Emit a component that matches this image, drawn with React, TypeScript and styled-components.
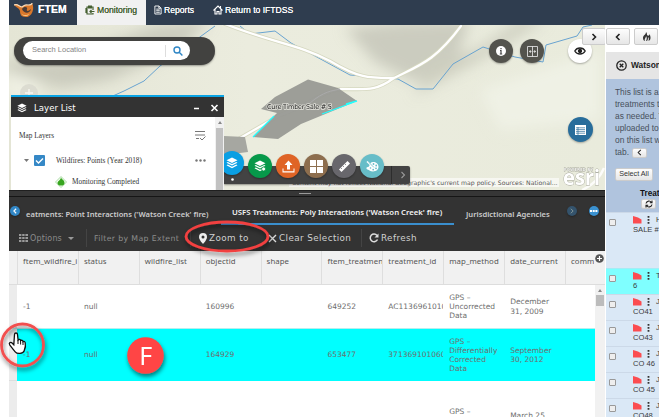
import React from "react";
import styled, { createGlobalStyle } from "styled-components";

const Global = createGlobalStyle`
  * { box-sizing: border-box; }
  body { margin: 0; background: #fff; overflow: hidden; }
  svg { display: block; flex: none; }
`;

const sans = `"Liberation Sans", Arial, sans-serif`;
const noto = `"Noto Sans", "Open Sans", sans-serif`;
const verdana = `"DejaVu Sans", Verdana, sans-serif`;

const Page = styled.div`
  position: relative;
  width: 659px;
  height: 417px;
  padding-left: 9px;
  overflow: hidden;
  background: #fff;
  display: flex;
  flex-direction: column;
  font-family: ${sans};
`;

/* ---------- top navigation ---------- */
const Nav = styled.header`
  height: 25px;
  flex: none;
  display: flex;
  background: #2f3d4f;
  color: #fff;
`;
const Brand = styled.div`
  width: 68px;
  display: flex;
  align-items: center;
  padding: 0 0 6px 5px;
  gap: 4px;
  font-weight: bold;
  font-size: 10.4px;
  letter-spacing: 0.1px;
  text-shadow: 0 0 0.5px #fff;
`;
const NavTab = styled.div<{ $active?: boolean; $left: number; $w: number }>`
  width: ${(p) => p.$w}px;
  padding: 0 0 5px ${(p) => p.$left}px;
  display: flex;
  align-items: center;
  gap: 2px;
  white-space: nowrap;
  font-size: 8.6px;
  color: ${(p) => (p.$active ? "#445f30" : "#fff")};
  background: ${(p) => (p.$active ? "#f1f1f1" : "none")};
  text-shadow: 0 0 0.4px currentColor;
`;

const Body = styled.div`
  flex: 1;
  min-height: 0;
  display: flex;
`;
const Main = styled.main`
  width: 596px;
  flex: none;
  display: flex;
  flex-direction: column;
`;

/* ---------- map ---------- */
const MapArea = styled.section`
  position: relative;
  height: 165px;
  flex: none;
  overflow: hidden;
  background: #e9eadb;
`;
const Over = styled.div<{ $x: number; $y: number }>`
  position: absolute;
  left: ${(p) => p.$x}px;
  top: ${(p) => p.$y}px;
`;
const SearchShell = styled.div`
  width: 201px;
  height: 28px;
  border-radius: 14px;
  background: #424240;
  padding: 4px 0 5px 9px;
  box-shadow: 0 1px 2px rgba(0, 0, 0, 0.35);
`;
const SearchField = styled.div`
  width: 167px;
  height: 19px;
  border-radius: 10px;
  background: #fff;
  display: flex;
  align-items: center;
  padding-left: 9px;
  font-size: 7.5px;
  color: #858585;
`;
const SearchLabel = styled.span`
  width: 134px;
  height: 12px;
  line-height: 9px;
  border-right: 1px solid #ddd;
  margin-right: 7px;
`;
const Round = styled.div<{ $bg: string; $size?: number }>`
  width: ${(p) => p.$size ?? 24}px;
  height: ${(p) => p.$size ?? 24}px;
  flex: none;
  border-radius: 50%;
  background: ${(p) => p.$bg};
  display: flex;
  align-items: center;
  justify-content: center;
  box-shadow: 0 1px 2px rgba(0, 0, 0, 0.3);
`;
const LayerPanel = styled.div`
  width: 213px;
  height: 96px;
  display: flex;
  flex-direction: column;
  border-top: 2px solid #0aa4e4;
  background: #fff;
`;
const LayerTitle = styled.div`
  height: 20px;
  flex: none;
  background: #333;
  color: #fff;
  display: flex;
  align-items: center;
  padding: 2px 5px 0 6px;
  font: 8.6px ${verdana};
  svg + span {
    margin: 0 auto 0 7px;
  }
`;
const LayerBody = styled.div`
  flex: 1;
  display: flex;
`;
const LayerRows = styled.div`
  flex: 1;
  padding: 7px 9px 0 8px;
  font: 7.3px "Liberation Serif", serif;
  color: #333;
`;
const LayerRow = styled.div<{ $h: number; $left?: number }>`
  height: ${(p) => p.$h}px;
  padding-left: ${(p) => p.$left ?? 0}px;
  display: flex;
  align-items: center;
  white-space: nowrap;
  .end {
    margin-left: auto;
  }
`;
const Check = styled.span`
  width: 11px;
  height: 11px;
  background: #3588c6;
  border-radius: 1px;
  margin: 0 11px 0 5px;
`;
const LayerScroll = styled.div`
  width: 9px;
  background: #f1f1f1;
  padding-top: 11px;
  display: flex;
  flex-direction: column;
  position: relative;
  &::before {
    content: "";
    position: absolute;
    left: 2.5px;
    top: 4px;
    border: 2px solid transparent;
    border-top: 0;
    border-bottom: 3px solid #888;
  }
  &::after {
    content: "";
    flex: 1;
    background: #c1c1c1;
    margin: 0 1px;
  }
`;
const Dock = styled.div`
  width: 186px;
  height: 18px;
  display: flex;
  align-items: center;
  gap: 4px;
  background: #434343;
  border-radius: 0 2px 2px 0;
  box-shadow: 0 1px 2px rgba(0, 0, 0, 0.4);
`;
const DockItem = styled(Round)<{ $up?: boolean; $first?: boolean }>`
  margin-top: ${(p) => (p.$up ? -24 : -18)}px;
  margin-left: ${(p) => (p.$first ? -4 : 0)}px;
`;
const DockEnd = styled.div`
  margin-left: 3px;
  height: 18px;
  border-left: 1px solid #2d2d2d;
  display: flex;
  align-items: center;
  padding-left: 7px;
`;
const Attribution = styled.div`
  width: 270px;
  height: 9px;
  background: rgba(255, 255, 255, 0.6);
  font: 6.15px/9px ${verdana};
  color: #555;
  padding-left: 3px;
  white-space: nowrap;
`;

/* ---------- attribute table ---------- */
const TablePanel = styled.section`
  flex: 1;
  min-height: 0;
  display: flex;
  flex-direction: column;
  background: #333;
`;
const Grip = styled.div`
  height: 7px;
  flex: none;
  border-top: 1px solid #1f1f1f;
  border-bottom: 1px solid #151515;
  background: #363636;
  padding: 2px 0 0 290px;
  &::after {
    content: "";
    display: block;
    width: 12px;
    height: 1px;
    background: #999;
  }
`;
const TabBar = styled.div`
  height: 28px;
  flex: none;
  display: flex;
  align-items: center;
  padding-left: 1px;
  font: 600 7.6px ${noto};
  color: #ccc;
`;
const TabText = styled.div<{ $w: number; $active?: boolean; $pad?: number; $fs?: number }>`
  width: ${(p) => p.$w}px;
  height: 28px;
  line-height: ${(p) => (p.$active ? 30 : 34)}px;
  padding-left: ${(p) => p.$pad ?? 0}px;
  font-size: ${(p) => p.$fs ?? 7.6}px;
  white-space: nowrap;
  color: ${(p) => (p.$active ? "#f4f4f4" : "#ccc")};
  border-bottom: 2px solid ${(p) => (p.$active ? "#3a8fce" : "transparent")};
`;
const TabMore = styled(Round)`
  margin-left: 12px;
`;
const Tools = styled.div`
  height: 26px;
  flex: none;
  display: flex;
  align-items: center;
  color: #cfcfcf;
  font: 8.8px ${verdana};
`;
const Tool = styled.div<{ $w: number; $pad: number; $dim?: boolean; $sep?: boolean; $fs?: number; $ls?: number }>`
  width: ${(p) => p.$w}px;
  height: 18px;
  padding-left: ${(p) => p.$pad}px;
  display: flex;
  align-items: center;
  gap: 2px;
  white-space: nowrap;
  font-size: ${(p) => p.$fs ?? 8.8}px;
  letter-spacing: ${(p) => p.$ls ?? 0.4}px;
  color: ${(p) => (p.$dim ? "#8c8c8c" : "#d0d0d0")};
  border-right: 1px solid ${(p) => (p.$sep ? "#444" : "transparent")};
`;
const Grid = styled.div`
  flex: 1;
  min-height: 0;
  background: #fff;
  display: flex;
  flex-direction: column;
  font: 7.5px/9.2px ${verdana};
  color: #6e6e6e;
`;
const HeadRow = styled.div`
  height: 34px;
  flex: none;
  display: flex;
  padding-left: 8px;
  background: #f1f1f1;
  border-bottom: 1px solid #ddd;
  position: relative;
`;
const HeadCell = styled.div`
  width: 60.9px;
  flex: none;
  overflow: hidden;
  border-left: 1px solid #dedede;
  padding: 6px 0 0 5px;
  font: 7.8px/9px ${noto};
  letter-spacing: 0.08px;
  color: #555;
  white-space: nowrap;
  &:last-of-type {
    width: 29px;
  }
`;
const GridBody = styled.div`
  flex: 1;
  min-height: 0;
  display: flex;
`;
const Rows = styled.div`
  width: 586px;
`;
const Row = styled.div<{ $h: number; $on?: boolean }>`
  height: ${(p) => p.$h}px;
  display: flex;
  align-items: center;
  background: ${(p) => (p.$on ? "#00ffff" : "#fff")};
  border-top: ${(p) => (p.$on ? "1px solid #b5eeee" : "0")};
`;
const Gutter = styled.div`
  width: 8px;
  align-self: stretch;
  flex: none;
  background: #ececec;
  border-bottom: 1px solid #ddd;
`;
const Cell = styled.div`
  width: 60.9px;
  flex: none;
  padding-left: 6px;
  overflow: hidden;
  white-space: pre;
`;
const VScroll = styled.div`
  flex: 1;
  background: #f1f1f1;
  padding: 10px 1px 0;
  position: relative;
  &::before {
    content: "";
    position: absolute;
    left: 3px;
    top: 4px;
    border: 2px solid transparent;
    border-top: 0;
    border-bottom: 3px solid #888;
  }
  &::after {
    content: "";
    display: block;
    height: 11px;
    background: #bcbcbc;
  }
`;

/* ---------- side panel ---------- */
const Side = styled.aside`
  width: 54px;
  flex: none;
  border-left: 1px solid #fff;
  overflow: hidden;
  white-space: nowrap;
  color: #444;
`;
const SideTools = styled.div`
  height: 27px;
  display: flex;
  gap: 4px;
  padding-top: 3px;
`;
const Btn = styled.div<{ $w: number; $h: number }>`
  width: ${(p) => p.$w}px;
  height: ${(p) => p.$h}px;
  flex: none;
  display: flex;
  align-items: center;
  justify-content: center;
  border: 1px solid #ccc;
  border-radius: 2px;
  background: linear-gradient(#fdfdfd, #e6e6e6);
  font-size: 7.2px;
  color: #333;
`;
const SideTitle = styled.div`
  height: 27px;
  background: #e5e5e5;
  display: flex;
  align-items: center;
  gap: 4px;
  padding: 0 0 1px 10px;
  font: bold 8.4px ${sans};
  color: #222;
`;
const Notes = styled.div`
  height: 133px;
  background: #b0c4de;
  padding: 7px 0 0 9px;
  font-size: 8.4px;
  line-height: 12.1px;
  color: #47505c;
  display: flex;
  flex-direction: column;
  align-items: flex-start;
`;
const NoteLine = styled.div`
  display: flex;
  align-items: center;
  gap: 3px;
  height: 12.1px;
`;
const SelectAll = styled(Btn)`
  margin-top: 9px;
`;
const TreatHead = styled.div`
  margin: 8px 0 0 25px;
  font: bold 8.2px/9px ${sans};
  color: #111;
  display: flex;
  flex-direction: column;
  gap: 1px;
  ${Btn} {
    margin-left: 1px;
  }
`;
const Item = styled.div<{ $h: number; $on?: boolean }>`
  height: ${(p) => p.$h}px;
  display: flex;
  padding: 2px 0 0 3px;
  background: ${(p) => (p.$on ? "#7fffff" : "#dae8f6")};
  border-top: 1px solid ${(p) => (p.$on ? "#a5ecf5" : "#ccd9e8")};
`;
const Box = styled.span`
  width: 7px;
  height: 7px;
  flex: none;
  margin: 4px 17px 0 0;
  border: 1px solid #999;
  border-radius: 1px;
  background: #eee;
`;
const ItemText = styled.div`
  font: 7.6px/10px ${sans};
  color: #3b3b3b;
  div {
    display: flex;
    align-items: center;
    height: 10px;
    gap: 6px;
  }
`;

/* ---------- annotations ---------- */
const Marks = styled.svg`
  position: absolute;
  left: 0;
  top: 0;
`;

const Chevron = ({ left, c = "#222", s = 8, w = 2 }: { left?: boolean; c?: string; s?: number; w?: number }) => (
  <svg width={s} height={s} viewBox="0 0 8 8" fill="none" stroke={c} strokeWidth={w}>
    <path d={left ? "M5.5 1 2.5 4l3 3" : "M2.5 1l3 3-3 3"} />
  </svg>
);

const Layers = ({ s = 12, gear }: { s?: number; gear?: boolean }) => (
  <svg width={s} height={s} viewBox="0 0 12 12" fill="#fff">
    <path d="M6 .5 11.5 3.2 6 6 .5 3.2z" />
    <path d="M1.8 5 .5 5.7 6 8.5l5.5-2.8L10.2 5 6 7.1z" />
    <path d="M1.8 7.6.5 8.3 6 11.2l5.5-2.9-1.3-.7L6 9.7z" />
    {gear && <circle cx="9.6" cy="9" r="2" stroke="#0a9a49" strokeWidth=".8" />}
  </svg>
);

const MapDrawing = () => (
  <svg width="596" height="165" viewBox="9 25 596 165">
    <defs>
      <filter id="soft" x="-30%" y="-30%" width="160%" height="160%">
        <feGaussianBlur stdDeviation="7" />
      </filter>
      <linearGradient id="land" x1="0" x2="1">
        <stop offset="0" stopColor="#e4e5d5" />
        <stop offset=".4" stopColor="#ebecde" />
        <stop offset="1" stopColor="#e9ebdc" />
      </linearGradient>
    </defs>
    <rect x="9" y="25" width="596" height="165" fill="url(#land)" />
    <g filter="url(#soft)">
      <path d="M5 62 60 60 155 25 210 20 180 50 110 80 60 88 5 70z" fill="#c6c7b9" opacity=".85" />
      <path d="M5 72 40 82 36 100 5 100z" fill="#eff0e3" />
      <path d="M345 28 400 22 470 20 458 55 415 82 375 62z" fill="#c6c7ba" opacity=".85" />
      <path d="M415 95 430 65 480 48 520 20 545 20 480 60z" fill="#cecfc0" />
      <path d="M480 90 600 50 600 120 500 130z" fill="#eff1e5" />
    </g>
    <g fill="none" stroke="#68a3d0" strokeWidth="1">
      <path d="M215 26 160 66 144 81 124 91 106 99" />
      <path d="M240 26 250 34 275 31 291 43 350 75 398 79 416 89 433 89 453 64 483 47 515 57 543 62 546 45 577 36 583 27 592 25" />
    </g>
    <g fill="none" strokeLinecap="round">
      <path d="M225 24C270 42 300 45 330 61 360 79 370 78 394 78 C420 65 435 61 461 26M394 78C375 92 365 89 341 89 320 92 310 105 280 115L235 141" stroke="#d5d7bf" strokeWidth="4" />
      <path d="M225 24C270 42 300 45 330 61 360 79 370 78 394 78 C420 65 435 61 461 26M394 78C375 92 365 89 341 89 320 92 310 105 280 115L235 141" stroke="#fff" strokeWidth="2.300" />
    </g>
    <path d="M308 79.5 338 88 357 101 301 124 278 139 253 137 277 113 261 109 275 97z" fill="#999a95" opacity=".96" />
    <path d="M224 136 245 137 248 152 224 155z" fill="#a6a7a1" />
    <path d="M310 103C324 91 332 91 340 89" fill="none" stroke="#aaa" strokeWidth="1" />
    <path d="M253 137 274 116M322 114 357 101 346 104" fill="none" stroke="#2ff" strokeWidth="1.3" />
    <text x="267" y="109" textLength="65" fontFamily="DejaVu Sans" fontSize="6.6" fill="#222" stroke="#d9d9d2" strokeWidth="1.8" strokeLinejoin="round" paintOrder="stroke">Cure Timber Sale # 5</text>
  </svg>
);

const Columns = ["ftem_wildfire_i", "status", "wildfire_list", "objectid", "shape", "ftem_treatmen", "treatment_id", "map_method", "date_current", "comm"];
const Data = [
  { h: 43, on: false, cells: ["-1", "null", "", "160996", "", "649252", "AC113696101060", "GPS –\nUncorrected\nData", "December\n31, 2009"] },
  { h: 53, on: true, cells: ["-1", "null", "", "164929", "", "653477", "371369101060", "GPS –\nDifferentially\nCorrected\nData", "September\n30, 2012"] },
  { h: 70, on: false, cells: ["", "", "", "", "", "", "", "GPS –\n\n", "March 25"] },
];
const Items = [
  { a: "HO", b: "SALE #1", h: 56 },
  { a: "TI", b: "6", h: 26, on: true },
  { a: "JA", b: "CO41", h: 26 },
  { a: "JA", b: "CO43", h: 26 },
  { a: "JA", b: "CO 46", h: 26.3 },
  { a: "JA", b: "CO 45", h: 26 },
  { a: "JA", b: "CO48", h: 26 },
];

export default function App() {
  return (
    <Page>
      <Global />
      <Nav>
        <Brand>
          <svg width="20" height="16" viewBox="0 0 20 16">
            <path d="M0 3C3 1 5 4 7 5 9 3 12 3 14 3c3 0 4-1 4-2 3 5 0 14-6 14C7 15 6 12 6 9 5 6 3 6 0 3z" fill="#d9782b" />
            <path d="M0 3c4-2 5 2 8 2 2-1 3-3 6-2 3 0 4-1 4-2" fill="none" stroke="#f7ddbc" strokeWidth="1.2" />
            <path d="M8 7c2-3 6-2 5 0-1 2 1 3 4 0-1 5-7 5-9 0" fill="#4b3c35" />
            <path d="M7 10c1 4 5 4 8 2-1 2-6 4-8-2z" fill="#ffe0a0" />
          </svg>
          FTEM
        </Brand>
        <NavTab $active $w={69} $left={8}>
          <svg width="10" height="10" viewBox="0 0 10 10" fill="none" stroke="#445f30" strokeWidth="1.2">
            <path d="M3 1.200h4M3 3h4M8 5V2H2v7h6V8M9.500 6.500H5M6.500 5 5 6.500 6.500 8M1 3v5" />
          </svg>
          Monitoring
        </NavTab>
        <NavTab $w={63} $left={8}>
          <svg width="8" height="10" viewBox="0 0 9 10" fill="none" stroke="#fff" strokeWidth="1">
            <path d="M1 .5h4.500L8 3v6.500H1zM2.500 4h4M2.500 5.800h4M2.500 7.600h4M5.500.5V3H8" />
          </svg>
          Reports
        </NavTab>
        <NavTab $w={100} $left={4}>
          <svg width="10" height="10" viewBox="0 0 10 10" fill="none" stroke="#fff" strokeWidth="1.1">
            <path d="M.5 5.500 5 1l4.500 4.500M2 4.500V9h2V6.500h2V9h2V4.500M7.500 1v2" />
          </svg>
          Return to IFTDSS
        </NavTab>
      </Nav>
      <Body>
        <Main>
          <MapArea>
            <MapDrawing />
            <Over $x={5} $y={12}>
              <SearchShell>
                <SearchField>
                  <SearchLabel>Search Location</SearchLabel>
                  <svg width="10" height="10" viewBox="0 0 10 10" fill="none" stroke="#2f86c5" strokeWidth="1.4">
                    <circle cx="4" cy="4" r="3" />
                    <path d="m6.200 6.200 3.200 3.200" />
                  </svg>
                </SearchField>
              </SearchShell>
            </Over>
            <Over $x={11} $y={59}>
              <svg width="18" height="18" viewBox="0 0 18 18">
                <circle cx="9" cy="9" r="9" fill="#dcdcd1" />
                <path d="M9 5v8M5 9h8" stroke="#f7f7f2" strokeWidth="1.3" />
              </svg>
            </Over>
            <Over $x={480} $y={14}>
              <Round $bg="#53534d">
                <svg width="10" height="10" viewBox="0 0 10 10">
                  <circle cx="5" cy="5" r="5" fill="#fff" />
                  <path d="M5 2v1.300M4 4.500h1V8M3.800 8h2.400" stroke="#444" strokeWidth="1.2" fill="none" />
                </svg>
              </Round>
            </Over>
            <Over $x={511} $y={14}>
              <Round $bg="#53534d">
                <svg width="11" height="11" viewBox="0 0 11 11" fill="none" stroke="#ddd" strokeWidth=".9">
                  <path d="M.5.5h10v10H.5zM5.500 0v11M2 5.500h2.500M6.500 5.500H9M3.300 4.200v2.600M7.700 4.200v2.600" />
                </svg>
              </Round>
            </Over>
            <Over $x={559} $y={14}>
              <Round $bg="#fff">
                <svg width="12" height="8" viewBox="0 0 12 8" fill="none" stroke="#222" strokeWidth="1.3">
                  <path d="M.8 4C3 0 9 0 11.200 4 9 8 3 8 .8 4z" />
                  <circle cx="6" cy="4" r="1.500" fill="#222" />
                </svg>
              </Round>
            </Over>
            <Over $x={573} $y={3}>
              <Btn $w={24} $h={17}>
                <Chevron w={1.6} />
              </Btn>
            </Over>
            <Over $x={559} $y={92}>
              <Round $bg="#286d9b" $size={25}>
                <svg width="11" height="10" viewBox="0 0 11 10">
                  <rect width="11" height="10" fill="#fff" />
                  <path d="M1 2.800h9M1 4.600h9M1 6.400h9M1 8.200h9M3 2v8" stroke="#286d9b" strokeWidth=".7" />
                </svg>
              </Round>
            </Over>
            <Over $x={280} $y={153}>
              <Attribution>Content may not reflect National Geographic's current map policy. Sources: National...</Attribution>
            </Over>
            <Over $x={215} $y={141}>
              <Dock>
                <DockItem $bg="#0a9fe3" $up $first><Layers /></DockItem>
                <DockItem $bg="#07994a"><Layers gear /></DockItem>
                <DockItem $bg="#df6426">
                  <svg width="13" height="13" viewBox="0 0 13 13" fill="#fff">
                    <path d="M6.500.5 10.500 5H8v4.500H5V5H2.500zM.5 8.500h1v2.700h10V8.500h1v4H.5z" />
                  </svg>
                </DockItem>
                <DockItem $bg="#8d6e4e">
                  <svg width="13" height="13" viewBox="0 0 13 13" fill="#fff">
                    <path d="M0 0h6v6H0zM7 0h6v6H7zM0 7h6v6H0zM7 7h6v6H7z" />
                  </svg>
                </DockItem>
                <DockItem $bg="#68676c">
                  <svg width="13" height="13" viewBox="0 0 13 13">
                    <path d="M9.500 1 12 3.500 3.500 12 1 9.500z" fill="#fff" />
                    <path d="m3 8 1 1M5 6l1 1M7 4l1 1" stroke="#68676c" strokeWidth=".7" />
                  </svg>
                </DockItem>
                <DockItem $bg="#67bdc8">
                  <svg width="13" height="13" viewBox="0 0 13 13">
                    <path d="M7 2c3 0 5.500 2 5.500 4.800S10 11.500 7 11.500 3.500 10 1.500 9.500C0 9 0 7 2 7c2 0 1-5 5-5z" fill="#fff" />
                    <path d="M1 1.500 7 7" stroke="#fff" strokeWidth="1.6" />
                    <path d="M3 2.500 8 7.500" stroke="#67bdc8" strokeWidth=".8" />
                    <g fill="#67bdc8"><circle cx="7.500" cy="4" r=".9" /><circle cx="10.200" cy="5.500" r=".9" /><circle cx="10" cy="8.300" r=".9" /><circle cx="7.200" cy="9.600" r=".9" /><circle cx="4.500" cy="8" r=".8" /></g>
                  </svg>
                </DockItem>
                <DockEnd><Chevron c="#999" w={1.1} s={8} /></DockEnd>
              </Dock>
            </Over>
            <Over $x={222} $y={153}>
              <svg width="3" height="3"><circle cx="1.500" cy="1.500" r="1.300" fill="#fff" /></svg>
            </Over>
            <Over $x={553} $y={138}>
              <svg width="43" height="27" viewBox="0 0 43 27">
                <path d="M20 27Q36 20 42 5" stroke="#fff" strokeWidth="2.4" fill="none" opacity=".85" />
                <g stroke="#a5a69b" paintOrder="stroke" fill="#fff" fontFamily="Noto Sans">
                  <text x="2" y="8" fontSize="4" fontWeight="600" textLength="29" strokeWidth=".8">POWERED BY</text>
                  <text x="1" y="22" fontSize="22" fontWeight="700" textLength="37" lengthAdjust="spacingAndGlyphs" strokeWidth=".8">esri</text>
                </g>
              </svg>
            </Over>
            <Over $x={2} $y={70}>
              <LayerPanel>
                <LayerTitle>
                  <Layers s={10} />
                  <span>Layer List</span>
                  <svg width="25" height="8" viewBox="0 0 25 8" stroke="#fff" strokeWidth="1.6">
                    <path d="M0 4.500h5M17.500 1l6 6M23.500 1l-6 6" />
                  </svg>
                </LayerTitle>
                <LayerBody>
                  <LayerRows>
                    <LayerRow $h={22}>
                      Map Layers
                      <svg className="end" width="11" height="11" viewBox="0 0 11 11" fill="none" stroke="#777" strokeWidth="1">
                        <path d="M0 1.500h10M0 5h10M1 8.500h3M5 8l2 2 3.500-3.500" />
                      </svg>
                    </LayerRow>
                    <LayerRow $h={28} $left={5}>
                      <svg width="5" height="3"><path d="M0 0h5L2.500 3z" fill="#777" /></svg>
                      <Check>
                        <svg width="11" height="11" viewBox="0 0 11 11" fill="none" stroke="#fff" strokeWidth="1.4"><path d="m2 5.500 2.500 2.500L9 3.500" /></svg>
                      </Check>
                      Wildfires: Points (Year 2018)
                      <svg className="end" width="11" height="3" fill="#777"><circle cx="1.500" cy="1.500" r="1.200" /><circle cx="5.500" cy="1.500" r="1.200" /><circle cx="9.500" cy="1.500" r="1.200" /></svg>
                    </LayerRow>
                    <LayerRow $h={15} $left={36}>
                      <svg width="17" height="12" viewBox="0 0 17 12">
                        <path d="M6 .5 11.500 6 6 11.500.5 6z" fill="#f7fff5" stroke="#9bd394" strokeWidth=".8" />
                        <path d="M6 1.500C7 4 9.500 4 9.500 7c0 2-1.500 2.500-3.500 2.500S2.500 9 2.500 7 5 5 6 1.500z" fill="#37a51f" />
                      </svg>
                      Monitoring Completed
                    </LayerRow>
                  </LayerRows>
                  <LayerScroll />
                </LayerBody>
              </LayerPanel>
            </Over>
          </MapArea>
          <TablePanel>
            <Grip />
            <TabBar>
              <Round $bg="#3287c6" $size={10}><Chevron left c="#fff" s={6} w={1.5} /></Round>
              <TabText $w={201} $pad={6}>eatments: Point Interactions ('Watson Creek' fire)</TabText>
              <TabText $w={233} $pad={11} $fs={7.75} $active>USFS Treatments: Poly Interactions ('Watson Creek' fire)</TabText>
              <TabText $w={113} $pad={12}>Jurisdictional Agencies</TabText>
              <Round $bg="#34536c" $size={10}><Chevron c="#899" s={6} w={1.3} /></Round>
              <TabMore $bg="#3a91d0" $size={10}>
                <svg width="8" height="2"><path d="M0 1h8" stroke="#fff" strokeWidth="2" strokeDasharray="2 .7" /></svg>
              </TabMore>
            </TabBar>
            <Tools>
              <Tool $w={78} $pad={10} $dim $sep $fs={8} $ls={0.15}>
                <svg width="9" height="8" viewBox="0 0 9 8" fill="#999"><path d="M0 0h2.400v2H0zM3.200 0h2.400v2H3.200zM6.400 0H9v2H6.400zM0 3h2.400v2H0zM3.200 3h2.400v2H3.200zM6.400 3H9v2H6.400zM0 6h2.400v2H0zM3.200 6h2.400v2H3.200zM6.400 6H9v2H6.400z" /></svg>
                Options
                <svg width="10" height="3" viewBox="-4 0 10 3"><path d="M0 0h6L3 3z" fill="#999" /></svg>
              </Tool>
              <Tool $w={104} $pad={7} $dim $sep $fs={7.8} $ls={0.35}>Filter by Map Extent</Tool>
              <Tool $w={77} $pad={8}>
                <svg width="8" height="11" viewBox="0 0 8 11"><path fillRule="evenodd" d="M4 0a4 4 0 0 1 4 4c0 3-4 7-4 7S0 7 0 4a4 4 0 0 1 4-4zm0 2.500a1.500 1.500 0 1 0 0 3 1.500 1.500 0 0 0 0-3z" fill="#eee" /></svg>
                Zoom to
              </Tool>
              <Tool $w={94} $pad={0} $sep>
                <svg width="9" height="9" viewBox="0 0 9 9"><path d="m1 1 7 7M8 1 1 8" stroke="#ddd" strokeWidth="1.4" /></svg>
                Clear Selection
              </Tool>
              <Tool $w={70} $pad={7}>
                <svg width="10" height="10" viewBox="0 0 10 10" fill="none" stroke="#ddd" strokeWidth="1.5"><path d="M8.500 6.500A3.800 3.800 0 1 1 8 2.500" /><path d="M9.500.5v4h-4z" fill="#ddd" stroke="none" /></svg>
                Refresh
              </Tool>
            </Tools>
            <Grid>
              <HeadRow>
                {Columns.map((c) => <HeadCell key={c}>{c}</HeadCell>)}
                <Over $x={586} $y={3} as="span">
                  <svg width="9" height="9" viewBox="0 0 9 9"><circle cx="4.500" cy="4.500" r="4.300" fill="#555" /><path d="M4.500 2v5M2 4.500h5" stroke="#fff" strokeWidth="1.2" /></svg>
                </Over>
              </HeadRow>
              <GridBody>
                <Rows>
                  {Data.map((r, i) => (
                    <Row key={i} $h={r.h} $on={r.on}>
                      <Gutter />
                      {r.cells.map((c, j) => <Cell key={j}>{c}</Cell>)}
                    </Row>
                  ))}
                </Rows>
                <VScroll />
              </GridBody>
            </Grid>
          </TablePanel>
        </Main>
        <Side>
          <SideTools>
            <Btn $w={24} $h={17}><Chevron left w={1.6} /></Btn>
            <Btn $w={24} $h={17}>
              <svg width="9" height="10" viewBox="0 0 9 10" fill="#333"><path d="M4 0c0 3-3 3-3 6 0 2 1 3 2 3C2 7 4 6 4 4c1 1 1 3 0 5 2 0 2-2 2-4 1 1 1 2 .5 4C9 8 9 5 7.500 2 7.500 4 6 4 5 3 5 2 5 1 4 0z" /></svg>
            </Btn>
          </SideTools>
          <SideTitle>
            <svg width="11" height="11" viewBox="0 0 11 11" fill="none" stroke="#222" strokeWidth="1.3"><circle cx="5.500" cy="5.500" r="4.700" /><path d="m3.700 3.700 3.600 3.600M7.300 3.700 3.700 7.300" /></svg>
            Watson Creek
          </SideTitle>
          <Notes>
            <NoteLine>This list is a list</NoteLine>
            <NoteLine>treatments that</NoteLine>
            <NoteLine>as needed. The</NoteLine>
            <NoteLine>uploaded to the</NoteLine>
            <NoteLine>on this list will</NoteLine>
            <NoteLine>tab. <Btn $w={15} $h={10}><Chevron left s={7} w={1.2} /></Btn></NoteLine>
            <SelectAll $w={38} $h={13}>Select All</SelectAll>
            <TreatHead>
              Treatment
              <Btn $w={15} $h={10}>
                <svg width="8" height="8" viewBox="0 0 8 8" fill="none" stroke="#222" strokeWidth="1.1"><path d="M1 3.500a3 3 0 0 1 5.500-1M7 4.500a3 3 0 0 1-5.500 1M7 .5v2.300H4.800M1 7.500V5.200h2.200" /></svg>
              </Btn>
            </TreatHead>
          </Notes>
          {Items.map((it, i) => (
            <Item key={i} $h={it.h} $on={it.on}>
              <Box />
              <ItemText>
                <div>
                  <svg width="17" height="8" viewBox="0 0 17 8"><path d="M0 0 5 1.500 8.500 3.500v4H0z" fill="#fb4c50" /><path d="M15.500 0v8" stroke="#333" strokeWidth="1.8" strokeDasharray="1.800 1.200" /></svg>
                  {it.a}
                </div>
                {it.b}
              </ItemText>
            </Item>
          ))}
        </Side>
      </Body>
      <Marks width="659" height="417" viewBox="0 0 659 417">
        <defs>
          <filter id="drop" x="-30%" y="-30%" width="170%" height="170%">
            <feDropShadow dx="1" dy="3" stdDeviation="2" floodOpacity=".5" />
          </filter>
        </defs>
        <g filter="url(#drop)">
          <ellipse cx="227" cy="236.500" rx="41" ry="14.500" fill="none" stroke="#f2403f" strokeWidth="2.8" />
          <circle cx="22.500" cy="345" r="21" fill="none" stroke="#f2504f" strokeWidth="2.8" />
          <circle cx="145.500" cy="355.500" r="18.300" fill="#ff4444" />
        </g>
        <text x="145.800" y="365" textAnchor="middle" fontFamily="Noto Sans" fontSize="25" fill="#fff">F</text>
        <path d="M14.500 334.500c0-2 3-2 3 0l.6 5.500c1-1 2.300-.6 2.500.6 1-.8 2.200-.2 2.400 1 1-.6 2 0 2.200 1.200.8 3-.2 6-1 8-1 3-7 3.500-9 1-2-2.400-4-5-5.500-7-1.200-2 1-3.300 2.600-1.600l1.500 1.600z" fill="#fff" stroke="#111" strokeWidth="1.3" />
        <path d="M18 340v4M20.600 341v3.500M23 342v3" stroke="#111" strokeWidth="1" />
      </Marks>
    </Page>
  );
}
